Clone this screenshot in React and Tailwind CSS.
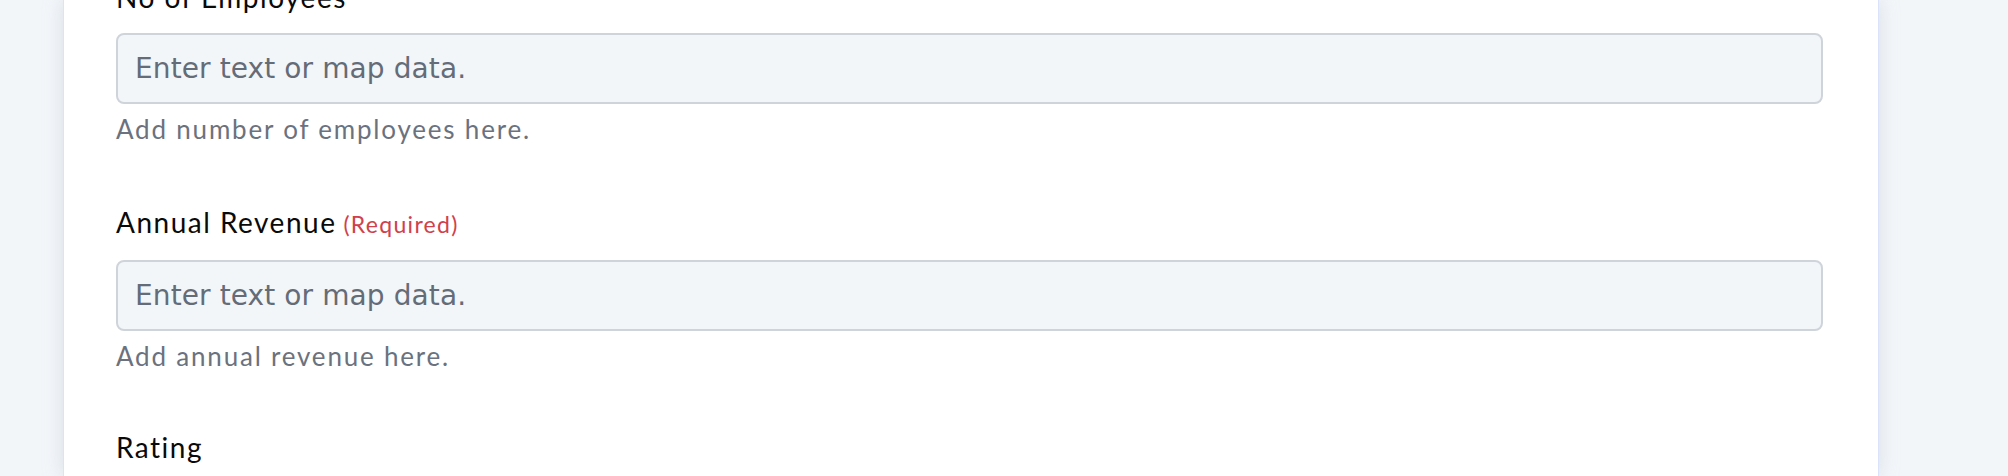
import React from "react";

const fields = [
  {
    label: "No of Employees",
    help: "Add number of employees here.",
    gap: "mt-[-23px]",
  },
  {
    label: "Annual Revenue",
    required: true,
    help: "Add annual revenue here.",
    gap: "mt-[55px]",
  },
];

function Field({ label, required, help, gap }) {
  return (
    <div className={`flex flex-col ${gap}`}>
      <label className="flex items-baseline gap-[7px] text-[28px] leading-[40px] tracking-[1.5px] text-[#0a0a0a]">
        {label}
        {required && (
          <span className="text-[23px] tracking-[1.3px] text-[#d0414c]">(Required)</span>
        )}
      </label>
      <input
        type="text"
        placeholder="Enter text or map data."
        className="mt-[16px] h-[71px] w-full rounded-lg border-2 border-[#cfd4db] bg-[#f3f6f9] pl-[17px] pr-[16px] font-['DejaVu_Sans',sans-serif] text-[28px] tracking-[0.1px] text-[#1f2937] outline-none placeholder:text-[#646c78]"
      />
      <p className="mt-[7px] text-[26px] leading-[36px] tracking-[1.8px] text-[#6b727e]">{help}</p>
    </div>
  );
}

export default function App() {
  return (
    <div className="h-[476px] overflow-hidden bg-[#f3f6f9] font-['Lato',sans-serif]">
      <div className="ml-[63px] flex h-full w-[1816px] flex-col border-x border-[#dbe3fa] bg-white pl-[52px] pr-[55px] shadow-[0_0_18px_rgba(170,180,200,0.35)]">
        {fields.map((f) => (
          <Field key={f.label} {...f} />
        ))}
        <div className="mt-[53px] text-[28px] leading-[40px] tracking-[1.5px] text-[#0a0a0a]">
          Rating
        </div>
      </div>
    </div>
  );
}
